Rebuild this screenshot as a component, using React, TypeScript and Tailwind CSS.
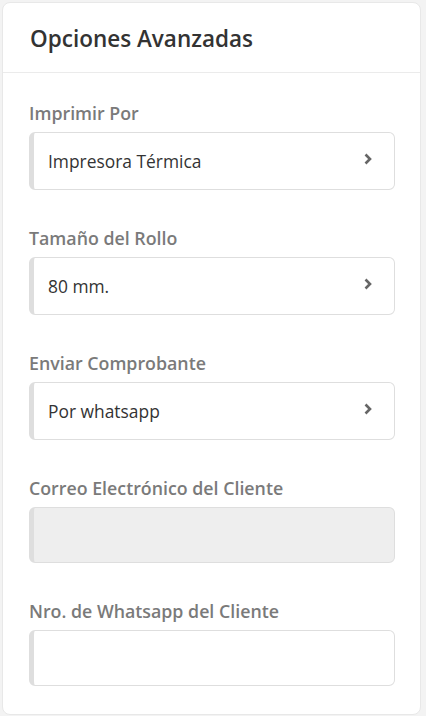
type Field = {
  label: string;
  kind: "select" | "input" | "disabled";
  value?: string;
};

const fields: Field[] = [
  { label: "Imprimir Por", kind: "select", value: "Impresora Térmica" },
  { label: "Tamaño del Rollo", kind: "select", value: "80 mm." },
  { label: "Enviar Comprobante", kind: "select", value: "Por whatsapp" },
  { label: "Correo Electrónico del Cliente", kind: "disabled" },
  { label: "Nro. de Whatsapp del Cliente", kind: "input" },
];

const Chevron = () => (
  <svg width="8" height="12" viewBox="0 0 8 12" className="-mt-[5px]">
    <polyline points="1.5,1.5 6,6 1.5,10.5" fill="none" stroke="#666" strokeWidth="2.6" />
  </svg>
);

const FieldRow = ({ field }: { field: Field }) => {
  if (field.kind === "select") {
    return (
      <div className="flex h-[58px] items-center justify-between rounded-md border border-[#dedede] border-l-[5px] bg-white pl-[14px] pr-[22px]">
        <span className="text-[17.4px] text-[#333]">{field.value}</span>
        <Chevron />
      </div>
    );
  }
  return (
    <input
      disabled={field.kind === "disabled"}
      className={
        field.kind === "disabled"
          ? "block h-[56px] w-full rounded-md border border-[#dedede] border-l-[5px] bg-[#eeeeee] px-[14px] outline-none"
          : "block h-[56px] w-full rounded-md border border-[#dedede] border-l-[5px] bg-white px-[14px] outline-none"
      }
    />
  );
};

export default function App() {
  return (
    <div className="min-h-[716px] bg-[#f3f3f3] px-[2px] pt-[2px] font-['Open_Sans',sans-serif]">
      <div className="w-[419px] rounded-lg border border-[#e8e8e8] bg-white">
        <div className="flex h-[70px] items-center border-b border-[#ebebeb] px-[27px] pt-[3px]">
          <h1 className="text-[22.5px] font-semibold text-[#333]">Opciones Avanzadas</h1>
        </div>
        <div className="flex flex-col gap-[37px] pl-[26px] pr-[25px] pt-[29px] pb-[28px]">
          {fields.map((f) => (
            <div key={f.label} className="flex flex-col gap-[8px]">
              <label className="text-[17.8px] leading-[22px] font-semibold text-[#7a7a7a]">{f.label}</label>
              <FieldRow field={f} />
            </div>
          ))}
        </div>
      </div>
    </div>
  );
}
